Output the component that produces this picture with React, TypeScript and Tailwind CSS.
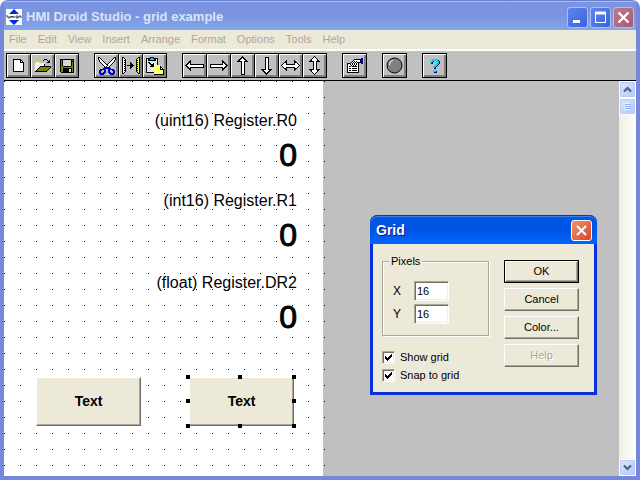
import type { ReactNode } from 'react';

const palette: Record<string, string> = {
  k: '#000000',
  w: '#ffffff',
  y: '#ffff66',
  o: '#808000',
  b: '#0000c0',
  n: '#000080',
  c: '#00e0e0',
  g: '#808080',
  l: '#d8d8d8',
};

function Pixels({ rows }: { rows: string[] }) {
  const width = Math.max(...rows.map((r) => r.length));
  return (
    <svg width={width} height={rows.length} shapeRendering="crispEdges" aria-hidden="true">
      {rows.flatMap((row, y) =>
        [...row].map((ch, x) =>
          palette[ch] ? <rect key={`${x}-${y}`} x={x} y={y} width="1" height="1" fill={palette[ch]} /> : null
        )
      )}
    </svg>
  );
}

const newIcon = [
  'kkkkkkkk...',
  'kwwwwwwkk..',
  'kwwwwwwkwk.',
  'kwwwwwwkkkk',
  'kwwwwwwwwwk',
  'kwwwwwwwwwk',
  'kwwwwwwwwwk',
  'kwwwwwwwwwk',
  'kwwwwwwwwwk',
  'kwwwwwwwwwk',
  'kwwwwwwwwwk',
  'kwwwwwwwwwk',
  'kkkkkkkkkkk',
];

const openIcon = [
  '.........kkk....',
  '........k...k.k.',
  '.............kk.',
  '.yyy........kkk.',
  'ywywyyyyyy......',
  'ywywywywyk......',
  'yywywywywk......',
  'ywywykkkkkkkkkkk',
  'yywykooooooooook',
  'ywykooooooooook.',
  'yykooooooooook..',
  'ykooooooooook...',
  'kkkkkkkkkkkk....',
];

const saveIcon = [
  'kkkkkkkkkkkkkk',
  'kokllllllllkok',
  'kokllllllllkkk',
  'kokllllllllkok',
  'kokllllllllkok',
  'kokllllllllkok',
  'kokllllllllkok',
  'kookkkkkkkkook',
  'kooooooooooook',
  'kookkkkkkkkkok',
  'kookkkkkkllkok',
  'kookkkkkkllkok',
  'kookkkkkkllkok',
  '.kkkkkkkkkkkkk',
];

const cutIcon = [
  'kk..............kk',
  'kwk............kwk',
  'kwwk..........kwwk',
  '.kwwk........kwwk.',
  '.kwwwk......kwwwk.',
  '..kwwwk....kwwwk..',
  '...kwwwk..kwwwk...',
  '....kwwwkkwwwk....',
  '.....kwwwkwwk.....',
  '......kwkwwk......',
  '......bbkkbb......',
  '.....bbbbbbbb.....',
  '..bbbbbb..bbbbbb..',
  '.bbb..bb..bb..bbb.',
  '.bb...bb..bb...bb.',
  '.bb..bbb..bbb..bb.',
  '.bbbbbb....bbbbbb.',
  '..bbbb......bbbb..',
];

const copyIcon = [
  'kk..............kk',
  'kwk............kyk',
  'kwwk..........kyyk',
  'kwkk..........kkyk',
  'kwwk..........kyyk',
  'kwkk....k.....kkyk',
  'kwwk....kk....kyyk',
  'kwkk....kkk...kkyk',
  'kwwk.kkkkkkk..kyyk',
  'kwkk....kkk...kkyk',
  'kwwk....kk....kyyk',
  'kwkk....k.....kkyk',
  'kwwk..........kyyk',
  'kwkk..........kkyk',
  'kwwk..........kyyk',
  'kwk............kyk',
  'kk..............kk',
];

const pasteIcon = [
  '....bbbb..........',
  'kkkkbccbkkkk......',
  'kwkbccccbkwk......',
  'kwkkkkkkkkwk......',
  'kwlwlwlwlwlk......',
  'klkkwlwlwlwk......',
  'kwlkkwlklwlk......',
  'klwlkkkkwlwk......',
  'kwlwlkkkyyyyyy....',
  'klwlkkkkywywywk...',
  'kwlwlwlwyywywykk..',
  'klwlwlwlywywywkyk.',
  'kwlwlwlwyywywykkkk',
  'klwlwlwlywywywywyk',
  'kwlwlwlwyywywywywk',
  'kkkkkkkkywywywywyk',
  '........yywywywywk',
  '........kkkkkkkkkk',
];

const propertiesIcon = [
  '..............bb',
  '.......kkkkkkkbb',
  '......kwwwwwwkbb',
  '.....kwkwkwwwkbb',
  '....kwkwkwkkkkbb',
  'kkkkwkwkwkwk..bb',
  'kwwkwkwkwkwk....',
  'kwwwkwkwkwwk....',
  'kwkkwkkkkkwk....',
  'kwwwwwwwwwwk....',
  'kwkkwkkkkkwk....',
  'kwwwwwwwwwwk....',
  'kwkkwkkkkkwk....',
  'kwwwwwwwwwwk....',
  'kkkkkkkkkkkk....',
];

const helpIcon = [
  '..cccccc..',
  '.cccccccn.',
  'cccn..cccn',
  'ccn...cccn',
  '.nn...cccn',
  '.....cccn.',
  '....cccn..',
  '...cccn...',
  '...ccn....',
  '....nn....',
  '..........',
  '...ccc....',
  '...cccn...',
  '....nnn...',
];

const checkIcon = ['......k', '.....kk', 'k...kkk', 'kk.kkk.', 'kkkkk..', '.kkk...', '..k....'];

function Arrow({ turn = '' }: { turn?: string }) {
  return (
    <svg className={turn} width="19" height="19" viewBox="0 0 19 19" shapeRendering="crispEdges" aria-hidden="true">
      <path d="M1 9.5 L5.5 5 V8 H18 V11 H5.5 V14 Z" fill="#fff" stroke="#000" />
    </svg>
  );
}

function DoubleArrow({ turn = '' }: { turn?: string }) {
  return (
    <svg className={turn} width="19" height="19" viewBox="0 0 19 19" shapeRendering="crispEdges" aria-hidden="true">
      <path d="M.5 9.5 L5.5 5 V8 H13.5 V5 L18.5 9.5 L13.5 14 V11 H5.5 V14 Z" fill="#fff" stroke="#000" />
    </svg>
  );
}

function RecordIcon() {
  return (
    <svg width="17" height="17" viewBox="0 0 17 17" aria-hidden="true">
      <circle cx="8.5" cy="8.5" r="7.5" fill="#808080" stroke="#000" />
      <path d="M3.5 8 C3.5 5.5 5 4 7 3.5" fill="none" stroke="#e0e0e0" strokeWidth="1.2" />
    </svg>
  );
}

const toolGroups: { label: string; icon: ReactNode }[][] = [
  [
    { label: 'New', icon: <Pixels rows={newIcon} /> },
    { label: 'Open', icon: <Pixels rows={openIcon} /> },
    { label: 'Save', icon: <Pixels rows={saveIcon} /> },
  ],
  [
    { label: 'Cut', icon: <Pixels rows={cutIcon} /> },
    { label: 'Copy', icon: <Pixels rows={copyIcon} /> },
    { label: 'Paste', icon: <Pixels rows={pasteIcon} /> },
  ],
  [
    { label: 'Left', icon: <Arrow /> },
    { label: 'Right', icon: <Arrow turn="rotate-180" /> },
    { label: 'Up', icon: <Arrow turn="rotate-90" /> },
    { label: 'Down', icon: <Arrow turn="-rotate-90" /> },
    { label: 'Same width', icon: <DoubleArrow /> },
    { label: 'Same height', icon: <DoubleArrow turn="rotate-90" /> },
  ],
  [{ label: 'Properties', icon: <Pixels rows={propertiesIcon} /> }],
  [{ label: 'Record', icon: <RecordIcon /> }],
  [{ label: 'Help', icon: <Pixels rows={helpIcon} /> }],
];

const menus = ['File', 'Edit', 'View', 'Insert', 'Arrange', 'Format', 'Options', 'Tools', 'Help'];

function AppIcon() {
  return (
    <svg width="16" height="16" viewBox="0 0 16 16" aria-hidden="true">
      <rect width="16" height="16" fill="#fff" />
      <path d="M8 0 L13 5 H3 Z M3 11 H13 L8 16 Z" fill="#0028f0" />
      <path d="M0 7h2v2h2V7M5 9V7l1 1l1-1v2M8 7v2M10 7h2v2h-2zM13 9V7h2v2" fill="none" stroke="#222" strokeWidth=".8" />
    </svg>
  );
}

function CaptionButton({ label, tone, children }: { label: string; tone: string; children: ReactNode }) {
  return (
    <button aria-label={label} className={`flex size-[21px] items-center justify-center rounded-[3px] border ${tone}`}>
      <svg width="13" height="13" viewBox="0 0 13 13" fill="none" stroke="#fff" aria-hidden="true">
        {children}
      </svg>
    </button>
  );
}

function TitleBar() {
  return (
    <header className="flex h-[30px] shrink-0 items-center bg-linear-to-b from-[#7a96df] via-[#7b93e0] to-[#82a8ea] pt-1 pr-0.5 pl-0.5 shadow-[inset_0_1px_0_#6a7fd0,inset_0_2px_0_#a3bff3]">
      <AppIcon />
      <h1 className="ml-1 flex-1 text-[13px] font-bold whitespace-nowrap text-[#d8e4f8]">
        HMI Droid Studio - grid example
      </h1>
      <div className="flex gap-0.5">
        <CaptionButton label="Minimize" tone="border-[#a9c0f4] bg-linear-to-br from-[#5f86ea] to-[#3a63dd]">
          <path d="M2 10.5h7" strokeWidth="3" />
        </CaptionButton>
        <CaptionButton label="Maximize" tone="border-[#a9c0f4] bg-linear-to-br from-[#5f86ea] to-[#3a63dd]">
          <path d="M1.5 1v11M11.5 1v11M1 11.5h11" />
          <path d="M1 2h11" strokeWidth="3" />
        </CaptionButton>
        <CaptionButton label="Close" tone="border-[#c9b5da] bg-linear-to-br from-[#bd7b92] to-[#a65a6e]">
          <path d="M1.5 1.5l10 10M11.5 1.5l-10 10" strokeWidth="2.4" />
        </CaptionButton>
      </div>
    </header>
  );
}

function Toolbar() {
  return (
    <div className="flex h-[30px] shrink-0 items-center gap-[15px] border-b border-black bg-[#c0c0c0] pl-0.5">
      {toolGroups.map((group) => (
        <div key={group[0].label} className="flex">
          {group.map((tool) => (
            <button
              key={tool.label}
              aria-label={tool.label}
              className="-mr-px flex size-[25px] items-center justify-center border border-black bg-[#c0c0c0] shadow-[inset_1px_1px_0_#fff,inset_-2px_-2px_0_#808080] last:mr-0"
            >
              {tool.icon}
            </button>
          ))}
        </div>
      ))}
    </div>
  );
}

function Register({ place, name, value }: { place: string; name: string; value: number }) {
  return (
    <div className={`absolute left-0 w-[293px] text-right text-black ${place}`}>
      <p className="text-[16px] leading-[20px]">{name}</p>
      <p className="mt-2 text-[32px] leading-[32px] [-webkit-text-stroke:1px_black]">{value}</p>
    </div>
  );
}

function CanvasButton({ place, children }: { place: string; children?: ReactNode }) {
  return (
    <div className={`absolute h-[49px] w-[105px] ${place}`}>
      <button className="size-full border border-t-white border-r-[#716f64] border-b-[#716f64] border-l-white bg-[#ece9d8] text-[14px] font-bold shadow-[inset_-1px_-1px_0_#aca899]">
        Text
      </button>
      {children}
    </div>
  );
}

const handles = [
  '-top-0.5 -left-[3px]',
  '-top-0.5 left-[49px]',
  '-top-0.5 -right-0.5',
  'top-[22px] -left-[3px]',
  'top-[22px] -right-0.5',
  '-bottom-0.5 -left-[3px]',
  '-bottom-0.5 left-[49px]',
  '-bottom-0.5 -right-0.5',
];

function Canvas() {
  return (
    <main className="relative w-[321px] shrink-0 overflow-hidden bg-linear-to-r from-white from-[319px] to-[#c0c0c0] to-[319px]">
      <div className="absolute inset-0 bg-[conic-gradient(from_270deg_at_1px_1px,#000_90deg,transparent_0)] bg-size-[16px_16px]" />
      <Register place="top-[30px]" name="(uint16) Register.R0" value={0} />
      <Register place="top-[110px]" name="(int16) Register.R1" value={0} />
      <Register place="top-[192px]" name="(float) Register.DR2" value={0} />
      <CanvasButton place="top-[296px] left-8" />
      <CanvasButton place="top-[296px] left-[185px]">
        {handles.map((h) => (
          <span key={h} className={`absolute size-1 bg-black ${h}`} />
        ))}
      </CanvasButton>
    </main>
  );
}

function ScrollButton({ label, children }: { label: string; children: ReactNode }) {
  return (
    <button
      aria-label={label}
      className="flex h-[17px] w-[17px] shrink-0 items-center justify-center rounded-xs border border-white bg-linear-to-br from-[#dbe6fe] to-[#b5c9f8] shadow-[inset_0_0_0_1px_#b9cbf6]"
    >
      <svg width="9" height="9" viewBox="0 0 9 9" fill="none" aria-hidden="true">
        {children}
      </svg>
    </button>
  );
}

function ScrollBar() {
  return (
    <div className="flex w-[17px] shrink-0 flex-col bg-linear-to-r from-[#f0eee6] to-[#fefefb]">
      <ScrollButton label="Scroll up">
        <path d="M1 6.5L4.5 3L8 6.5" stroke="#4d6185" strokeWidth="2.2" />
      </ScrollButton>
      <ScrollButton label="Scroll thumb">
        <path d="M1 1.5h6M1 3.5h6M1 5.5h6M1 7.5h6" stroke="#eef4fe" shapeRendering="crispEdges" />
        <path d="M2 2.5h6M2 4.5h6M2 6.5h6" stroke="#8cb0f8" shapeRendering="crispEdges" />
      </ScrollButton>
      <div className="flex-1" />
      <ScrollButton label="Scroll down">
        <path d="M1 2.5L4.5 6L8 2.5" stroke="#4d6185" strokeWidth="2.2" />
      </ScrollButton>
    </div>
  );
}

const sunken =
  'border border-t-[#aca899] border-l-[#aca899] border-r-white border-b-white bg-white shadow-[inset_1px_1px_0_#716f64,inset_-1px_-1px_0_#f1efe2]';

const raised =
  'border border-t-white border-l-white border-r-[#716f64] border-b-[#716f64] shadow-[inset_-1px_-1px_0_#aca899]';

function PixelField({ id, label }: { id: string; label: string }) {
  return (
    <div className="flex items-center">
      <label htmlFor={id} className="w-[21px] text-[12px]">
        {label}
      </label>
      <input id={id} defaultValue="16" className={`h-5 w-[35px] pl-0.5 outline-none ${sunken}`} />
    </div>
  );
}

function CheckRow({ label }: { label: string }) {
  return (
    <label className="flex h-[18px] items-center gap-[5px]">
      <span className="relative size-[13px]">
        <input type="checkbox" defaultChecked className={`peer block size-[13px] appearance-none ${sunken}`} />
        <span className="pointer-events-none absolute inset-0 hidden items-center justify-center peer-checked:flex">
          <Pixels rows={checkIcon} />
        </span>
      </span>
      {label}
    </label>
  );
}

function GridDialog() {
  return (
    <section
      role="dialog"
      aria-label="Grid"
      className="absolute top-[134px] left-[366px] w-[227px] rounded-t-lg border-x-[3px] border-b-[3px] border-[#0831d9] bg-[#ece9d8] text-[11px] leading-[13px] text-black"
    >
      <div className="-mx-[3px] flex h-[29px] items-center rounded-t-lg bg-linear-to-b from-[#0058e6] via-[#0054e3] to-[#0066ff] pt-0.5 pr-[5px] pl-1.5 shadow-[inset_0_1px_0_#0831d9,inset_0_2px_0_#3a80f0]">
        <h2 className="flex-1 text-[14px] font-bold text-white [text-shadow:1px_1px_0_#0f1089]">Grid</h2>
        <CaptionButton label="Close dialog" tone="border-white bg-linear-to-br from-[#f09070] to-[#d8401c]">
          <path d="M2 2l9 9M11 2l-9 9" strokeWidth="2" />
        </CaptionButton>
      </div>
      <div className="flex items-start justify-between pt-[11px] pr-[15px] pb-2 pl-[9px]">
        <div>
          <fieldset className="h-[81px] w-[107px] border border-[#aca899] pt-[13px] pl-[10px] shadow-[inset_1px_1px_0_#fff,1px_1px_0_#fff]">
            <legend className="-ml-1 bg-[#ece9d8] px-0.5">Pixels</legend>
            <div className="flex flex-col gap-[3px]">
              <PixelField id="grid-x" label="X" />
              <PixelField id="grid-y" label="Y" />
            </div>
          </fieldset>
          <div className="mt-3">
            <CheckRow label="Show grid" />
            <CheckRow label="Snap to grid" />
          </div>
        </div>
        <div className="flex flex-col gap-[5px] pt-[5px]">
          <div className="border border-black">
            <button className={`block h-[21px] w-[73px] ${raised}`}>OK</button>
          </div>
          <button className={`h-[23px] w-[75px] ${raised}`}>Cancel</button>
          <button className={`h-[23px] w-[75px] ${raised}`}>Color...</button>
          <button disabled className={`h-[23px] w-[75px] text-[#aca899] [text-shadow:1px_1px_0_#fff] ${raised}`}>
            Help
          </button>
        </div>
      </div>
    </section>
  );
}

export default function App() {
  return (
    <div className="bg-white font-['Liberation_Sans',Arial,sans-serif]">
      <div className="flex h-screen flex-col overflow-hidden rounded-t-lg border-x-4 border-b-4 border-[#7588de] shadow-[inset_0_0_0_1px_#5a63c8]">
        <TitleBar />
        <nav className="flex h-[21px] shrink-0 items-center gap-[11px] border-b-2 border-white bg-[#ece9d8] pl-[5px] text-[11px] text-[#aca899]">
          {menus.map((menu) => (
            <button key={menu}>{menu}</button>
          ))}
        </nav>
        <Toolbar />
        <div className="relative flex min-h-0 flex-1 bg-[#c0c0c0]">
          <Canvas />
          <div className="flex-1" />
          <ScrollBar />
          <GridDialog />
        </div>
      </div>
    </div>
  );
}
